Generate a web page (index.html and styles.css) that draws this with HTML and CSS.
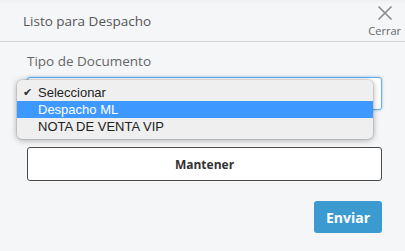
FILE: index.html
```html
<!DOCTYPE html>
<html lang="es">
<head>
  <meta charset="UTF-8">
  <meta name="viewport" content="width=device-width, initial-scale=1.0">
  <title>Listo para Despacho</title>
  <link rel="stylesheet" href="styles.css">
</head>
<body>
  <div class="modal">
    <header class="modal-head">
      <h4 class="modal-title">Listo para Despacho</h4>
      <button class="close">
        <svg width="16" height="16" viewBox="0 0 16 16"><path d="M1.5 1.5 L14.5 14.5 M14.5 1.5 L1.5 14.5" stroke="#8a8a8a" stroke-width="1.6" fill="none"/></svg>
        <span>Cerrar</span>
      </button>
    </header>

    <div class="modal-body">
      <label class="field-label">Tipo de Documento</label>
      <div class="select-wrap">
        <div class="select"></div>
        <!-- native dropdown open -->
        <ul class="options">
          <li class="checked"><span class="check">✔</span>Seleccionar</li>
          <li class="active">Despacho ML</li>
          <li>NOTA DE VENTA VIP</li>
        </ul>
      </div>
      <button class="btn-outline">Mantener</button>
      <div class="actions">
        <button class="btn-primary">Enviar</button>
      </div>
    </div>
  </div>
</body>
</html>
```

FILE: styles.css
```css
* { margin: 0; padding: 0; box-sizing: border-box; }
body {
  background: #f5f6f8;
  font-family: 'Open Sans', sans-serif;
  color: #555;
  width: 405px;
  height: 251px;
  overflow: hidden;
}
.modal-head {
  height: 42px;
  display: flex;
  align-items: flex-start;
  justify-content: space-between;
  border-bottom: 1px solid #d4d6d9;
  background: linear-gradient(#eeeff1, #f5f6f8 4px);
  padding: 0 4px 0 23px;
}
.modal-title {
  font-weight: normal;
  font-size: 13.5px;
  color: #555;
  margin-top: 12px;
}
.close {
  border: none;
  background: none;
  display: flex;
  flex-direction: column;
  align-items: center;
  padding-top: 5px;
  font-family: 'Open Sans', sans-serif;
  font-size: 11px;
  color: #666;
  line-height: 13px;
}
.close svg { margin-bottom: 3px; }
.modal-body {
  padding: 10px 23px 0 27px;
}
.field-label {
  display: block;
  font-size: 13.5px;
  color: #666;
  line-height: 18px;
}
.select-wrap {
  position: relative;
  margin-top: 7px;
}
.select {
  height: 33px;
  background: #fff;
  border: 1px solid #66afe9;
  border-radius: 3px;
  box-shadow: 0 0 3px rgba(102,175,233,0.7);
}
.options {
  position: absolute;
  left: -10px;
  top: 3px;
  width: 356px;
  list-style: none;
  background: #efefef;
  border-radius: 5px;
  padding: 4px 0;
  box-shadow: 0 1px 6px rgba(0,0,0,0.35), 0 0 0 0.5px rgba(0,0,0,0.15);
  font-family: 'Liberation Sans', Arial, sans-serif;
  font-size: 13px;
  color: #222;
}
.options li {
  height: 17px;
  line-height: 17px;
  padding-left: 21px;
  position: relative;
}
.options .check {
  position: absolute;
  left: 6px;
  font-size: 11px;
  font-family: 'DejaVu Sans', sans-serif;
  color: #333;
}
.options .active {
  background: #3d99ff;
  color: #fff;
}
.btn-outline {
  display: block;
  width: 100%;
  height: 34px;
  margin-top: 37px;
  background: #fff;
  border: 1px solid #4a4a4a;
  border-radius: 3px;
  font-family: 'Open Sans', sans-serif;
  font-weight: bold;
  font-size: 12px;
  color: #333;
}
.actions {
  display: flex;
  justify-content: flex-end;
  margin-top: 20px;
}
.btn-primary {
  width: 68px;
  height: 32px;
  background: #3b9bd0;
  border: none;
  border-radius: 3px;
  color: #fff;
  font-family: 'Open Sans', sans-serif;
  font-weight: bold;
  font-size: 14px;
}
```
